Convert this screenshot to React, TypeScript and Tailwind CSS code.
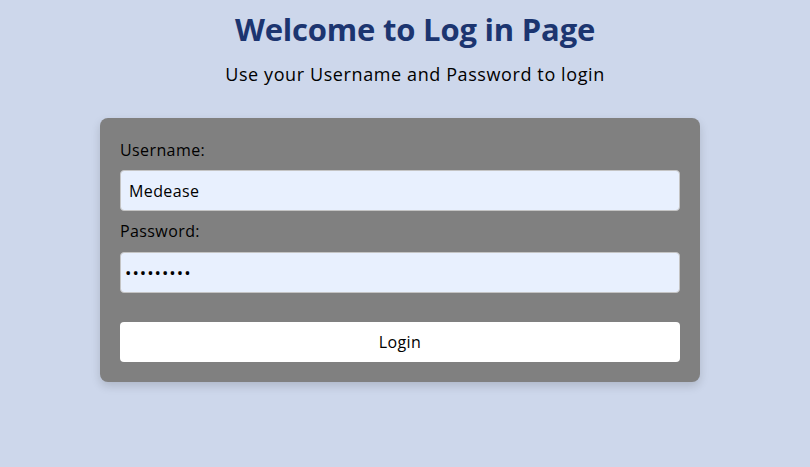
export default function App() {
  return (
    <div
      className="min-h-[467px] bg-[#cdd7eb] flex flex-col items-center text-black"
      style={{ fontFamily: '"Open Sans", "Noto Sans", sans-serif' }}
    >
      <h1 className="ml-[20px] mt-[9px] text-[31px] font-bold leading-[40px] tracking-[-0.2px] text-[#1c3570]">
        Welcome to Log in Page
      </h1>
      <p className="ml-[20px] mt-[13px] text-[18px] leading-[24px] tracking-[0.6px]">
        Use your Username and Password to login
      </p>

      {/* Login card */}
      <div className="mr-[10px] mt-[32px] w-[600px] rounded-lg bg-[#808080] p-5 shadow-[0_4px_10px_rgba(0,0,0,0.15)]">
        <label className="block text-[16px] leading-[24px] tracking-[0.4px] mb-2">Username:</label>
        <input
          type="text"
          readOnly
          value="Medease"
          className="block w-full h-[41px] rounded border border-[#c4c4c4] bg-[#e8f0fe] px-2 text-[16px] tracking-[0.4px] text-black outline-none"
          style={{ fontFamily: "inherit" }}
        />
        <label className="block text-[16px] leading-[24px] tracking-[0.4px] mt-2 mb-[9px]">Password:</label>
        <input
          type="password"
          readOnly
          value="medease12"
          className="block w-full h-[41px] rounded border border-[#c4c4c4] bg-[#e8f0fe] px-1 text-[17px] tracking-[1px] text-black outline-none"
        />
        <button className="mt-[29px] block w-full h-[40px] rounded bg-white text-[16px] tracking-[0.4px] text-black">
          Login
        </button>
      </div>
    </div>
  );
}
